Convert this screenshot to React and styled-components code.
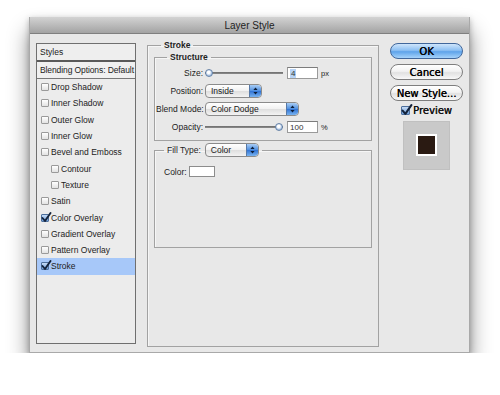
import { createGlobalStyle, styled } from "styled-components";

const Global = createGlobalStyle`
  html, body {
    margin: 0;
    background: #fff;
    font-family: "Liberation Sans", Arial, sans-serif;
  }
`;

const Page = styled.div`
  padding: 17px 0 0 29px;
`;

const Window = styled.div`
  width: 441px;
  height: 336px;
  box-sizing: border-box;
  background: #e8e8e8;
  border: 1px solid #a9a9a9;
  border-top: none;
  box-shadow: 0 14px 20px rgba(0, 0, 0, 0.45), 0 2px 6px rgba(0, 0, 0, 0.25);
  display: flex;
  flex-direction: column;
`;

const TitleBar = styled.div`
  height: 17px;
  flex: none;
  background: linear-gradient(#d3d3d3, #b6b6b6 60%, #a3a3a3);
  border-bottom: 1px solid #7f7f7f;
  box-sizing: border-box;
  display: flex;
  align-items: center;
  justify-content: center;
  font-size: 10px;
  color: #1e1e1e;
`;

const Content = styled.div`
  display: flex;
  align-items: flex-start;
  padding: 6px 0 0 6px;
`;

const StyleList = styled.div`
  margin-top: 3px;
  width: 100px;
  height: 301px;
  box-sizing: border-box;
  border: 1px solid #6f6f6f;
  background: #ececec;
  display: flex;
  flex-direction: column;
  font-size: 8.5px;
  color: #222;
  white-space: nowrap;
`;

const ListHead = styled.div`
  height: 16px;
  display: flex;
  align-items: center;
  padding-left: 3px;
  background: #eeeeee;
  border-bottom: 2px solid #5a5a5a;
`;

const ListBlend = styled.div`
  height: 16px;
  display: flex;
  align-items: center;
  padding-left: 3px;
  background: #f0f0f0;
  border-bottom: 1px solid #777;
  letter-spacing: -0.1px;
`;

const ListItem = styled.div`
  height: 16.3px;
  flex: none;
  display: flex;
  align-items: center;
  gap: 2px;
  padding-left: ${(p) => (p.$indent ? 14 : 4)}px;
  background: ${(p) => (p.$active ? "#a7c8f9" : "transparent")};
`;

const Box = styled.span`
  width: 8px;
  height: 8px;
  flex: none;
  display: inline-flex;
  box-sizing: border-box;
  border: 1px solid ${(p) => (p.$checked ? "#4d6f9c" : "#9a9a9a")};
  border-radius: 1px;
  background: ${(p) =>
    p.$checked ? "linear-gradient(#c7dcf6, #6e9fdc)" : "linear-gradient(#fff, #e2e2e2)"};
  position: relative;
  overflow: visible;
  & svg {
    position: absolute;
    left: -1px;
    top: -3px;
  }
`;

const Check = ({ checked, size = 8 }) => (
  <Box $checked={checked} style={{ width: size, height: size }}>
    {checked && (
      <svg width={size + 3} height={size + 3} viewBox="0 0 11 11">
        <path d="M1.5 6 L4 9 L9.5 1" fill="none" stroke="#14233b" strokeWidth="1.9" strokeLinecap="round" strokeLinejoin="round" />
      </svg>
    )}
  </Box>
);

const Middle = styled.div`
  margin-left: 11px;
  width: 232px;
`;

const Group = styled.fieldset`
  margin: ${(p) => p.$mt || 0}px 0 0;
  padding: ${(p) => p.$pad || "0 6px"};
  border: 1px solid #a2a2a2;
  box-shadow: inset 1px 1px 0 #f6f6f6;
  min-width: 0;
  box-sizing: border-box;
  height: ${(p) => (p.$h ? `${p.$h}px` : "auto")};
`;

const Legend = styled.legend`
  margin-left: ${(p) => p.$ml ?? 6}px;
  padding: 0 3px;
  font-size: 8.5px;
  line-height: 10px;
  font-weight: ${(p) => (p.$plain ? "normal" : "bold")};
  color: #1e1e1e;
  display: flex;
  align-items: center;
  gap: 2px;
`;

const Rows = styled.div`
  display: flex;
  flex-direction: column;
  gap: 2px;
  padding: 3px 0 5px;
`;

const Row = styled.div`
  height: 16px;
  display: flex;
  align-items: center;
  font-size: 8.5px;
  color: #222;
  white-space: nowrap;
`;

const Label = styled.span`
  width: 47px;
  text-align: right;
  flex: none;
`;

const Track = styled.div`
  width: 78px;
  height: 10px;
  margin-left: 2px;
  display: flex;
  align-items: center;
  justify-content: ${(p) => (p.$end ? "flex-end" : "flex-start")};
  background: linear-gradient(transparent 4px, #6c6c6c 4px, #8d8d8d 6px, transparent 6px);
  border-radius: 2px;
`;

const Knob = styled.span`
  width: 8px;
  height: 8px;
  border-radius: 50%;
  box-sizing: border-box;
  border: 1px solid #6783a7;
  background: radial-gradient(circle at 45% 40%, #ffffff 0 25%, #9ebbe0 70%);
`;

const Field = styled.div`
  width: 31px;
  height: 12px;
  margin-left: 4px;
  box-sizing: border-box;
  background: #fff;
  border: 1px solid #9a9a9a;
  border-top-color: #7c7c7c;
  display: flex;
  align-items: center;
  padding-left: 2px;
  font-size: 8px;
  color: #333;
`;

const Sel = styled.span`
  background: #b7d3f5;
  padding: 0 1px;
`;

const Unit = styled.span`
  margin-left: 3px;
  font-size: 7.5px;
`;

const PopupBox = styled.div`
  width: ${(p) => p.$w}px;
  height: 14px;
  margin-left: 2px;
  box-sizing: border-box;
  border: 1px solid #8b8b8b;
  border-radius: 4px;
  background: linear-gradient(#ffffff, #f1f1f1 50%, #dedede 51%, #f3f3f3);
  display: flex;
  align-items: center;
  font-size: 8.5px;
  font-weight: normal;
  color: #1a1a1a;
  overflow: hidden;
`;

const PopupText = styled.span`
  flex: 1;
  padding-left: 5px;
`;

const Arrows = styled.span`
  width: 11px;
  height: 12px;
  flex: none;
  display: flex;
  align-items: center;
  justify-content: center;
  border-left: 1px solid #5679a8;
  border-radius: 0 3px 3px 0;
  background: linear-gradient(#a9cdf5, #4d8ee0 50%, #2f72d4 51%, #78b3f0);
`;

const Popup = ({ w, children }) => (
  <PopupBox $w={w}>
    <PopupText>{children}</PopupText>
    <Arrows>
      <svg width="5" height="8" viewBox="0 0 5 8">
        <path d="M2.5 0.5 L4.6 3 L0.4 3 Z M2.5 7.5 L4.6 5 L0.4 5 Z" fill="#0d1f3b" />
      </svg>
    </Arrows>
  </PopupBox>
);

const FillRow = styled.div`
  display: flex;
  align-items: center;
  gap: 2px;
  padding: 9px 0 0 3px;
  font-size: 8.5px;
  color: #222;
`;

const ColorWell = styled.span`
  width: 26px;
  height: 11px;
  box-sizing: border-box;
  background: #fff;
  border: 1px solid #8c8c8c;
`;

const Right = styled.div`
  margin: 3px 0 0 11px;
  width: 73px;
  display: flex;
  flex-direction: column;
  align-items: center;
`;

const Button = styled.div`
  width: 73px;
  height: 16px;
  margin-bottom: 5px;
  box-sizing: border-box;
  border: 1px solid ${(p) => (p.$primary ? "#41679b" : "#7e7e7e")};
  border-radius: 8px;
  background: ${(p) =>
    p.$primary
      ? "linear-gradient(#cfe5fb, #8dc0f3 45%, #5ea3ea 55%, #a6d3fb)"
      : "linear-gradient(#ffffff, #f2f2f2 45%, #e1e1e1 55%, #f8f8f8)"};
  display: flex;
  align-items: center;
  justify-content: center;
  font-family: "DejaVu Sans", sans-serif;
  font-size: 10px;
  color: #000;
  text-shadow: 0.3px 0 0 #000;
`;

const PreviewRow = styled.div`
  display: flex;
  align-items: center;
  gap: 3px;
  margin-top: -1px;
  height: 11px;
  font-family: "DejaVu Sans", sans-serif;
  font-size: 10px;
  color: #111;
  text-shadow: 0.3px 0 0 #111;
`;

const Swatch = styled.div`
  margin-top: 5px;
  width: 47px;
  height: 49px;
  background: #c9c9c9;
  border: 1px solid #c0c0c0;
  box-sizing: border-box;
  display: flex;
  align-items: center;
  justify-content: center;
`;

const Chip = styled.div`
  width: 21px;
  height: 22px;
  box-sizing: border-box;
  border: 2px solid #fff;
  background: #2a1a12;
  margin-bottom: 2px;
`;

const effects = [
  ["Drop Shadow"],
  ["Inner Shadow"],
  ["Outer Glow"],
  ["Inner Glow"],
  ["Bevel and Emboss"],
  ["Contour", false, true],
  ["Texture", false, true],
  ["Satin"],
  ["Color Overlay", true],
  ["Gradient Overlay"],
  ["Pattern Overlay"],
  ["Stroke", true, false, true],
];

export default function App() {
  return (
    <Page>
      <Global />
      <Window>
        <TitleBar>Layer Style</TitleBar>
        <Content>
          <StyleList>
            <ListHead>Styles</ListHead>
            <ListBlend>Blending Options: Default</ListBlend>
            {effects.map(([name, checked, indent, active]) => (
              <ListItem key={name} $indent={indent} $active={active}>
                <Check checked={checked} />
                {name}
              </ListItem>
            ))}
          </StyleList>

          <Middle>
            <Group $h={307}>
              <Legend $ml={7}>Stroke</Legend>
              <Group $mt={2} $pad="0 1px">
                <Legend $ml={11}>Structure</Legend>
                <Rows>
                  <Row>
                    <Label>Size:</Label>
                    <Track>
                      <Knob />
                    </Track>
                    <Field>
                      <Sel>4</Sel>
                    </Field>
                    <Unit>px</Unit>
                  </Row>
                  <Row>
                    <Label>Position:</Label>
                    <Popup w={57}>Inside</Popup>
                  </Row>
                  <Row>
                    <Label>Blend Mode:</Label>
                    <Popup w={94}>Color Dodge</Popup>
                  </Row>
                  <Row>
                    <Label>Opacity:</Label>
                    <Track $end>
                      <Knob />
                    </Track>
                    <Field>100</Field>
                    <Unit>%</Unit>
                  </Row>
                </Rows>
              </Group>
              <Group $mt={2} $h={105}>
                <Legend $plain $ml={3}>
                  Fill Type:
                  <Popup w={54}>Color</Popup>
                </Legend>
                <FillRow>
                  Color:
                  <ColorWell />
                </FillRow>
              </Group>
            </Group>
          </Middle>

          <Right>
            <Button $primary>OK</Button>
            <Button>Cancel</Button>
            <Button>New Style...</Button>
            <PreviewRow>
              <Check checked size={9} />
              Preview
            </PreviewRow>
            <Swatch>
              <Chip />
            </Swatch>
          </Right>
        </Content>
      </Window>
    </Page>
  );
}
